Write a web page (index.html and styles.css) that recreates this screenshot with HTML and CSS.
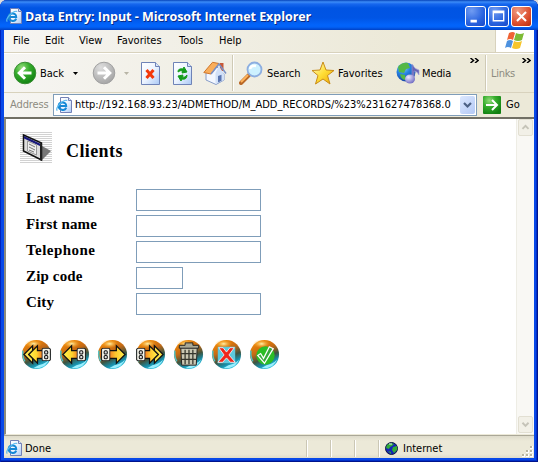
FILE: index.html
```html
<!DOCTYPE html>
<html lang="en">
<head>
<meta charset="utf-8">
<title>Data Entry: Input - Microsoft Internet Explorer</title>
<link rel="stylesheet" href="styles.css">
</head>
<body>
<svg class="defs" width="0" height="0">
  <defs>
    <linearGradient id="paper" x1="0" y1="0" x2="1" y2="1"><stop offset="0" stop-color="#fff"/><stop offset=".5" stop-color="#edf4ff"/><stop offset="1" stop-color="#a9c8f5"/></linearGradient>
    <radialGradient id="green" cx=".35" cy=".25" r=".8"><stop offset="0" stop-color="#91dc78"/><stop offset=".45" stop-color="#35ac2c"/><stop offset="1" stop-color="#108011"/></radialGradient>
    <radialGradient id="gray" cx=".35" cy=".25" r=".8"><stop offset="0" stop-color="#dedede"/><stop offset="1" stop-color="#a4a4a4"/></radialGradient>
    <linearGradient id="gold" x1="0" y1="0" x2="1" y2="1"><stop offset="0" stop-color="#fffbd0"/><stop offset=".5" stop-color="#ffdf38"/><stop offset="1" stop-color="#eca500"/></linearGradient>
    <linearGradient id="arrowfill" x1="0" y1="0" x2="1" y2="0"><stop offset="0" stop-color="#fff34d"/><stop offset=".55" stop-color="#ffd52e"/><stop offset="1" stop-color="#f26a20"/></linearGradient>
    <linearGradient id="arrowfill-right" x1="0" y1="0" x2="1" y2="0"><stop offset="0" stop-color="#f26a20"/><stop offset=".45" stop-color="#ffc52e"/><stop offset="1" stop-color="#fff34d"/></linearGradient>
    <radialGradient id="globe" cx=".35" cy=".25" r=".8"><stop offset="0" stop-color="#92d6ff"/><stop offset=".45" stop-color="#2783e3"/><stop offset="1" stop-color="#123c9b"/></radialGradient>
    <radialGradient id="note" cx=".35" cy=".3" r=".7"><stop offset="0" stop-color="#efeaff"/><stop offset="1" stop-color="#7672c5"/></radialGradient>
    <linearGradient id="orb" x1=".3" y1="0" x2=".75" y2="1"><stop offset="0" stop-color="#f18a08"/><stop offset=".35" stop-color="#c76a13"/><stop offset=".6" stop-color="#3e5440"/><stop offset=".78" stop-color="#168fab"/><stop offset="1" stop-color="#4bdcf4"/></linearGradient>
    <radialGradient id="shine"><stop offset="0" stop-color="#fff4ae"/><stop offset="1" stop-color="#ff9e0d" stop-opacity="0"/></radialGradient>
    <symbol id="iepage" viewBox="0 0 16 16">
      <path d="M4.500.5h8l3 3v12h-11z" fill="url(#paper)" stroke="#7381b6"/>
      <path d="M12.500.5v3h3" fill="#dbe6fa" stroke="#7381b6"/>
      <path d="M10.200 10.600C8.700 14.500 2.400 13 2.700 8.500 3 4.800 10.200 4.200 10.200 8.900H3.800" fill="none" stroke="#1688d6" stroke-width="2"/>
      <path d="M1.300 13.600C-1.600 11 7.500 2 11.200 3.500" fill="none" stroke="#58b9ee" stroke-width="1.200"/>
    </symbol>
    <symbol id="orbbase" viewBox="0 0 32 32">
      <circle cx="16" cy="16" r="15" fill="url(#orb)"/>
      <ellipse cx="13" cy="5" rx="9" ry="4.500" fill="url(#shine)"/>
      <path d="M2 12Q1 18 4 23" stroke="#4fc3c9" stroke-width="1.500" fill="none"/>
      <path d="M13 30Q26 31 30 19Q28 25 18 27Z" fill="#9aefff"/>
    </symbol>
    <symbol id="tag" viewBox="0 0 9 13">
      <path d="M.5 1.500l1-1h6l1 1v10l-1 1h-6l-1-1z" fill="#f4f4ea" stroke="#222"/>
      <rect x="3" y="3" width="3" height="3" rx="1" fill="#ddd" stroke="#111"/><rect x="3" y="7.500" width="3" height="3" rx="1" fill="#ddd" stroke="#111"/>
    </symbol>
  </defs>
</svg>

<div class="window">
  <header class="titlebar">
    <svg class="title-icon" width="16" height="16"><use href="#iepage"/></svg>
    <span class="title">Data Entry: Input - Microsoft Internet Explorer</span>
    <div class="caption-buttons">
      <svg class="cap" viewBox="0 0 21 21"><path d="M5 14h7v3H5z" fill="#fff"/></svg>
      <svg class="cap" viewBox="0 0 21 21"><path d="M4 4h13v12H4zM5.500 7v7.500h10V7z" fill="#fff" fill-rule="evenodd"/></svg>
      <svg class="cap close" viewBox="0 0 21 21"><path d="M5.500 5.500l10 10m0-10l-10 10" stroke="#fff" stroke-width="2.300"/></svg>
    </div>
  </header>

  <div class="chrome">
    <nav class="menubar">
      <span class="m-file">File</span><span class="m-edit">Edit</span><span class="m-view">View</span><span class="m-fav">Favorites</span><span class="m-tools">Tools</span><span class="m-help">Help</span>
      <div class="throbber">
        <svg width="20" height="20" viewBox="0 0 20 20">
          <path d="M4 2Q8 0 10 2L8 9Q5 7 2 9z" fill="#ef6334"/><path d="M11 2Q15 4 19 2l-2 7q-4 2-8 0z" fill="#7dbb35"/>
          <path d="M2 10q3-2 6 0l-2 7q-3-2-6 0z" fill="#4d91df"/><path d="M9 10q4 2 8 0l-2 7q-4 2-8 0z" fill="#f7c52b"/>
        </svg>
      </div>
    </nav>

    <div class="toolbar">
      <svg class="ic-nav" viewBox="0 0 24 24"><circle cx="12" cy="12" r="10.800" fill="url(#green)" stroke="#398c32"/><path d="M18.500 12H7M12 6.200L6.200 12l5.800 5.800" fill="none" stroke="#fff" stroke-width="3"/></svg>
      <span class="t-back">Back</span>
      <svg class="arrow a1" viewBox="0 0 5 3"><path d="M0 0h5L2.500 3z"/></svg>
      <svg class="ic-nav" viewBox="0 0 24 24"><circle cx="12" cy="12" r="10.800" fill="url(#gray)" stroke="#a0a0a0"/><path d="M5.500 12H17M12 6.200l5.800 5.800-5.800 5.800" fill="none" stroke="#fff" stroke-width="3"/></svg>
      <svg class="arrow a2" viewBox="0 0 5 3"><path d="M0 0h5L2.500 3z" fill="#b8b5a6"/></svg>
      <svg class="ic-page p1" viewBox="0 0 19 23"><path d="M.5.5h14l4 4v18H.5z" fill="url(#paper)" stroke="#6f83b7"/><path d="M14.500.5v4h4" fill="#d8e5fa" stroke="#6f83b7"/><path d="M5.500 8l7 8m0-8l-7 8" stroke="#f3380b" stroke-width="3"/></svg>
      <svg class="ic-page p2" viewBox="0 0 19 23"><path d="M.5.5h14l4 4v18H.5z" fill="url(#paper)" stroke="#6f83b7"/><path d="M14.500.5v4h4" fill="#d8e5fa" stroke="#6f83b7"/><path d="M5 10Q5 6 10 7l1-2 3 5-5 1 .8-2Q7 8 5 10zM14 13q0 5-5 4l-1 2-3-5 5-1-.8 2q3 1 4.800-2z" fill="#149c1b" stroke="#149c1b"/></svg>
      <svg class="ic-home" viewBox="0 0 24 24"><path d="M17 2h3.500v8H17z" fill="#c85836"/><path d="M3 12l10-7 8 8v6l-8 4.500L3 19z" fill="#f3f7ff" stroke="#879cc7"/><path d="M12.500 12v11l8.500-4v-6L16 5z" fill="#d2e1f8"/><path d="M.8 11.500L9.500 1.300 16 2.500 8 13z" fill="#f9ae5c" stroke="#cf762b"/><path d="M8 13l8-10 7 9.500" fill="none" stroke="#7890c6" stroke-width="1.500"/><path d="M15 15l3.500-1.200v6L15 21.500z" fill="#5a75b0"/></svg>
      <i class="vsep s1"></i>
      <svg class="ic-search" viewBox="0 0 24 24"><path d="M2 22l8-8" stroke="#b86827" stroke-width="4" stroke-linecap="round"/><path d="M2 21l7-7" stroke="#ffb45c" stroke-width="2"/><circle cx="15.500" cy="8.500" r="7" fill="#cdf1ff" stroke="#8daee0" stroke-width="1.800"/><path d="M11 8q1-4 6-3" fill="none" stroke="#fff" stroke-width="2.500"/></svg>
      <span class="t-search">Search</span>
      <svg class="ic-star" viewBox="0 0 24 24"><path d="M12 1l3 8 8 .5-6.500 5L19 23l-7-5-7.500 5L7 14.500 1 9.500 9 9z" fill="url(#gold)" stroke="#c98c17"/></svg>
      <span class="t-fav">Favorites</span>
      <svg class="ic-media" viewBox="0 0 24 22"><circle cx="10" cy="10" r="9.500" fill="url(#globe)"/><path d="M2 5Q6 0 12 1l2 5-4 1-2 4-5-1zM4 12l5 1 1 5q-5 0-6-6z" fill="#54b847"/><path d="M16 2q2 5 7 6v5q-2-4-5-4v8h-2z" fill="#6865b4" stroke="#a09dde" stroke-width=".6"/><ellipse cx="14" cy="17" rx="5" ry="4.500" fill="url(#note)"/></svg>
      <span class="t-media">Media</span>
      <svg class="chev c1" viewBox="0 0 9 5"><path d="M.5 0l3 2.500-3 2.500M5 0l3 2.500L5 5" fill="none" stroke="#000" stroke-width="1.500"/></svg>
      <i class="vsep s2"></i>
      <span class="t-links">Links</span>
      <svg class="chev c2" viewBox="0 0 9 5"><path d="M.5 0l3 2.500-3 2.500M5 0l3 2.500L5 5" fill="none" stroke="#000" stroke-width="1.500"/></svg>
    </div>

    <div class="addressbar">
      <span class="t-address">Address</span>
      <div class="urlbox"><svg width="16" height="16"><use href="#iepage"/></svg><span class="url">http://192.168.93.23/4DMETHOD/M_ADD_RECORDS/%23%231627478368.0</span>
        <svg class="drop" viewBox="0 0 15 18"><path d="M4 7l3.500 3.500L11 7" fill="none" stroke="#4d6185" stroke-width="2.200"/></svg></div>
      <svg class="go" viewBox="0 0 18 18"><rect width="18" height="18" rx="1" fill="url(#green)"/><path d="M3 9h11M9 4l5 5-5 5" stroke="#fff" stroke-width="2" fill="none"/></svg>
      <span class="t-go">Go</span>
    </div>
  </div>

  <div class="viewport">
    <main class="page">
      <div class="heading">
        <svg width="32" height="31" viewBox="0 0 32 31">
          <path d="M0 .5h32M0 2.500h32M0 4.500h32M0 6.500h32M0 8.500h32M0 10.500h32M0 12.500h32M0 14.500h32M0 16.500h32M0 18.500h32M0 20.500h32M0 22.500h32M0 24.500h32M0 26.500h32M0 28.500h32M0 30.500h32" stroke="#d2d2d2"/>
          <path d="M22 14l9 5-10 10z" fill="#777"/><path d="M3.500 3l18 8v17L3.500 19z" fill="#ddd" stroke="#111" stroke-width="1.500"/><path d="M4 4l17 8v2.500L4 6.500z" fill="#19197b"/><path d="M7.500 9l9 4v10l-9-4z" fill="#eee" stroke="#999"/><path d="M9 12l6 3m-6 0l6 3m-6 0l5 2" stroke="#777"/><path d="M20 11l2 1v17l-2-1z" fill="#222"/>
        </svg>
        <h1>Clients</h1>
      </div>
      <form class="fields">
        <label for="ln">Last name</label><input id="ln" type="text">
        <label for="fn">First name</label><input id="fn" type="text">
        <label for="tel" class="wide">Telephone</label><input id="tel" type="text">
        <label for="zip">Zip code</label><input id="zip" class="short" type="text">
        <label for="city">City</label><input id="city" type="text">
      </form>
      <div class="orbs">
        <svg viewBox="0 0 32 32"><use href="#orbbase"/><path d="M12 7v5l-4 4 4 4v5l-9-9z" fill="#ffe44a" stroke="#111" stroke-width="1.300"/><path d="M17 7v5h6v8h-6v5l-9-9z" fill="url(#arrowfill)" stroke="#111" stroke-width="1.300"/><use href="#tag" x="21" y="9" width="10" height="14"/></svg>
        <svg viewBox="0 0 32 32"><use href="#orbbase"/><path d="M13 7v5h8v8h-8v5l-9-9z" fill="url(#arrowfill)" stroke="#111" stroke-width="1.300"/><use href="#tag" x="18" y="9" width="10" height="14"/></svg>
        <svg viewBox="0 0 32 32"><use href="#orbbase"/><path d="M20 7v5h-9v8h9v5l9-9z" fill="url(#arrowfill-right)" stroke="#111" stroke-width="1.300"/><use href="#tag" x="4" y="9" width="10" height="14"/></svg>
        <svg viewBox="0 0 32 32"><use href="#orbbase"/><path d="M20 7l9 9-9 9v-5l4-4-4-4z" fill="#ffe44a" stroke="#111" stroke-width="1.300"/><path d="M15 7v5H9v8h6v5l9-9z" fill="url(#arrowfill-right)" stroke="#111" stroke-width="1.300"/><use href="#tag" x="1" y="9" width="10" height="14"/></svg>
        <svg viewBox="0 0 32 32"><use href="#orbbase"/><path d="M8 9h17l-1 18H9z" fill="#c9c7b2" stroke="#222"/><path d="M6.500 6.500h6V4h8v2.500h6v3h-20z" fill="#aaa996" stroke="#222"/><path d="M12.500 11v15m4-15v15m4-15v15M8 15h16M9 21h15" stroke="#35362d" stroke-width="1.300"/></svg>
        <svg viewBox="0 0 32 32"><use href="#orbbase"/><path d="M7 8h18v17H7z" fill="#5cc8dc"/><path d="M8 9h4.500l3.500 4.500L19.500 9H24l-5.500 7.500L25 24h-5l-4-4.500-4 4.500H7l6.500-7.500z" fill="#ed251b" stroke="#fff" stroke-width=".8"/></svg>
        <svg viewBox="0 0 32 32"><use href="#orbbase"/><circle cx="17" cy="17" r="9.500" fill="#2bbd25"/><path d="M9 17l3-2 3 5 6-12 4 2-9 15z" fill="#36a83a" stroke="#fff" stroke-width="1.300"/></svg>
      </div>
    </main>
    <div class="scrollbar">
      <svg viewBox="0 0 15 16"><path d="M4 9.500L7.500 6 11 9.500" fill="none" stroke="#c5c3b8" stroke-width="2.200"/></svg>
      <svg viewBox="0 0 15 16"><path d="M4 6l3.500 3.500L11 6" fill="none" stroke="#c5c3b8" stroke-width="2.200"/></svg>
    </div>
  </div>

  <footer class="statusbar">
    <svg class="status-icon" width="16" height="16"><use href="#iepage"/></svg>
    <span class="t-done">Done</span>
    <i></i><i></i><i></i><i></i>
    <svg class="status-globe" viewBox="0 0 13 13"><circle cx="6.500" cy="6.500" r="6" fill="#1425b7" stroke="#111b3d"/><path d="M2 3q3-3 7-1L7 4 5 5 4 7 1 6zM8 5l4-1v4l-3 3-2-3zM3 9l3 1v2z" fill="#31ad35"/><path d="M4 2h3" stroke="#d9eee4"/></svg>
    <span class="t-internet">Internet</span>
    <svg class="grip" viewBox="0 0 12 12"><path d="M8 0h3v3H8zM4 4h3v3H4zM8 4h3v3H8zM0 8h3v3H0zM4 8h3v3H4zM8 8h3v3H8z" fill="#fff"/><path d="M8 0h2v2H8zM4 4h2v2H4zM8 4h2v2H8zM0 8h2v2H0zM4 8h2v2H4zM8 8h2v2H8z" fill="#b9b5a0"/></svg>
  </footer>
</div>
</body>
</html>
```
FILE: styles.css
```css
* { box-sizing: border-box; }
html, body { margin: 0; width: 538px; height: 462px; overflow: hidden; background: #ddd; }
body { font: 11px/14px "DejaVu Sans Condensed", "DejaVu Sans", sans-serif; color: #000; }
svg { display: block; flex: none; }
span { white-space: nowrap; flex: none; }
.defs { height: 0; }
.window { display: flex; flex-direction: column; width: 538px; height: 462px; padding: 0 4px 4px; border-radius: 7px 7px 0 0; overflow: hidden; background: #0848e8; box-shadow: inset 1px 0 #0023bd, inset -1px -1px #00138c, inset -2px -2px #0030c9; }

.titlebar { height: 30px; flex: none; display: flex; margin: 0 -4px; padding: 0 6px; background: linear-gradient(#0643ba 0, #3c8cf8 2px, #1767ee 4px, #0054e3 8px, #0055e5 18px, #0264fb 25px, #0262f7 27px, #0041c5 30px); }
.title-icon { margin: 8px 3px 0 0; }
.title { width: 287px; margin-top: 7px; color: #fff; font: bold 12.5px/20px "Open Sans", sans-serif; letter-spacing: -.04px; text-shadow: 1px 1px #0a2c88; }
.caption-buttons { display: flex; gap: 2px; margin: 6px 0 0 auto; }
.cap { width: 21px; height: 21px; border: 1px solid #fff; border-radius: 3px; background: radial-gradient(circle at 30% 20%, #719cf2, #2863df 60%, #1949c7); }
.close { background: radial-gradient(circle at 30% 20%, #ef9a81, #dc5030 60%, #b52b0b); }

.chrome { height: 87px; flex: none; background: linear-gradient(90deg, #f6f5f2, #ece9d8 75%); }
.menubar { height: 23px; display: flex; align-items: flex-start; padding-left: 9px; border-bottom: 1px solid #d8d2bd; }
.menubar span { padding-top: 4px; }
.m-file { width: 32px; }
.m-edit { width: 34px; }
.m-view { width: 38px; }
.m-fav { width: 62px; }
.m-tools { width: 40px; }
.throbber { display: flex; justify-content: center; align-items: center; width: 39px; height: 22px; margin-left: auto; background: #fff; border-left: 1px solid #d8d2bd; }

.toolbar { height: 40px; display: flex; align-items: center; padding-left: 9px; border-top: 1px solid #fff; border-bottom: 1px solid #d8d2bd; }
.toolbar span { padding-top: 1px; }
.ic-nav { width: 24px; height: 24px; }
.t-back { width: 33px; margin-left: 3px; }
.arrow { width: 5px; height: 3px; }
.a1 { margin-right: 14px; }
.a2 { margin: 0 12px 0 8px; }
.ic-page { width: 19px; height: 23px; }
.p1 { margin-right: 13px; }
.p2 { margin-right: 11px; }
.ic-home { width: 24px; height: 24px; margin-right: 5px; }
.vsep { flex: none; width: 2px; height: 36px; background: #cfcab5; border-right: 1px solid #fff; }
.s1 { margin-right: 5px; }
.ic-search { width: 24px; height: 24px; margin-right: 4px; }
.t-search { width: 44px; letter-spacing: -.1px; }
.ic-star { width: 24px; height: 24px; margin-right: 3px; }
.t-fav { width: 58px; }
.ic-media { width: 24px; height: 22px; margin-right: 2px; }
.t-media { width: 48px; letter-spacing: -.1px; }
.chev { width: 9px; height: 5px; align-self: flex-start; margin-top: 4px; }
.s2 { margin: 0 4px 0 6px; }
.t-links { width: 31px; color: #8d8b80; letter-spacing: -.3px; }

.addressbar { height: 24px; display: flex; align-items: center; padding: 0 0 1px 6px; }
.t-address { width: 43px; color: #8d8b80; letter-spacing: -.1px; }
.urlbox { width: 424px; height: 22px; display: flex; align-items: center; padding: 0 1px 0 2px; background: #fff; border: 1px solid #7f9db9; }
.url { margin-left: 3px; width: 383px; padding-top: 1px; }
.drop { width: 15px; height: 18px; margin-left: auto; background: linear-gradient(135deg, #dce8ff, #b4c9f5); border-radius: 2px; }
.go { width: 18px; height: 18px; margin: 0 5px 0 6px; }

.viewport { height: 318px; flex: none; display: flex; border-top: 2px solid #716f64; border-left: 2px solid #8c8a7c; border-bottom: 1px solid #ece9d8; background: #fff; }
.page { flex: 1; padding: 13px 0 0 14px; font-family: "Liberation Serif", serif; }
.heading { display: flex; height: 31px; }
h1 { margin: 8px 0 0 14px; font: bold 18px/22px "Liberation Serif", serif; letter-spacing: .4px; }
.fields { display: grid; grid-template-columns: 110px 125px; grid-auto-rows: 22px; row-gap: 4px; margin: 26px 0 0 6px; }
.fields label { font: bold 15px/18px "Liberation Serif", serif; letter-spacing: .15px; }
.fields .wide { letter-spacing: .45px; }
.fields input { width: 125px; height: 22px; padding: 1px; border: 1px solid #7f9db9; background: #fff; }
.fields .short { width: 47px; }
.orbs { display: flex; gap: 7px; margin: 24px 0 0 1px; }
.orbs svg { width: 31px; height: 31px; }
.scrollbar { width: 18px; display: flex; flex-direction: column; justify-content: space-between; padding: 0 1px 1px; background: #f9f8f4; border-left: 1px solid #eeede5; }
.scrollbar svg { width: 15px; height: 17px; border: 1px solid #e2dfd2; border-radius: 2px; background: #f2f0e7; }

.statusbar { height: 23px; flex: none; display: flex; align-items: center; padding: 2px 0 0 2px; border-top: 1px solid #aaa797; background: linear-gradient(#dedbcb, #ece9d8 5px, #ece9d8 18px, #dedbcb); }
.statusbar span { padding-top: 1px; }
.status-icon { margin-right: 3px; }
.t-done { width: 281px; }
.statusbar i { flex: none; width: 2px; height: 17px; margin-right: 22px; background: #cbc7b5; border-right: 1px solid #fff; }
.statusbar i:nth-of-type(4) { margin-right: 5px; }
.status-globe { width: 13px; height: 13px; margin-right: 5px; }
.grip { width: 12px; height: 12px; margin: 7px 0 0 auto; }
```
